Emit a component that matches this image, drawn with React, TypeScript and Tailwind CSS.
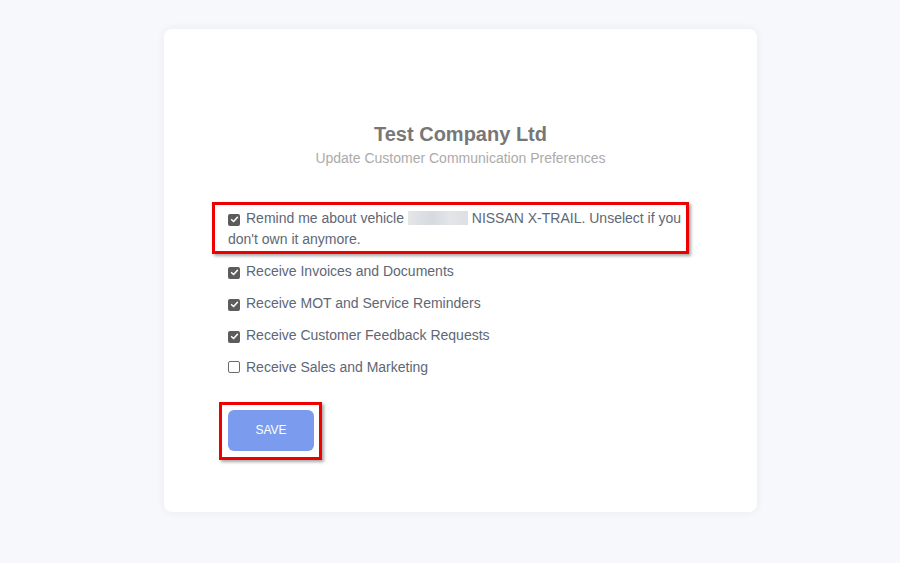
import React from "react";

const font = { fontFamily: '"Liberation Sans", Arial, sans-serif' };

function Check({ checked }: { checked: boolean }) {
  return (
    <span
      className={
        "inline-flex items-center justify-center w-[12px] h-[12px] rounded-[2px] align-[-1px] mr-[6px] " +
        (checked ? "bg-[#5c5c5c]" : "bg-white border border-[#6b6b6b]")
      }
    >
      {checked && (
        <svg width="9" height="9" viewBox="0 0 10 10">
          <path d="M1.8 5.2 L4 7.3 L8.3 2.6" fill="none" stroke="#fff" strokeWidth="1.7" strokeLinecap="round" strokeLinejoin="round" />
        </svg>
      )}
    </span>
  );
}

export default function App() {
  const rows = [
    { label: "Receive Invoices and Documents", checked: true },
    { label: "Receive MOT and Service Reminders", checked: true },
    { label: "Receive Customer Feedback Requests", checked: true },
    { label: "Receive Sales and Marketing", checked: false },
  ];
  return (
    <div className="min-h-[563px] w-full bg-[#f7f8fc] pt-[29px]" style={font}>
      <div className="ml-[164px] w-[593px] h-[483px] bg-white rounded-[8px] shadow-[0_0_10px_rgba(0,0,0,0.06)] pt-[94px] pl-[48px] pr-[48px]">
        <div className="text-center">
          <div className="text-[20px] leading-[22px] font-bold text-[#777]">Test Company Ltd</div>
          <div className="text-[14px] leading-[18px] mt-[4px] text-[#ababab]">Update Customer Communication Preferences</div>
        </div>
        <div className="mt-[35px] text-[14px] leading-[21px] text-[#5e6775]">
          <div className="w-[477px] border-[3px] border-[#ee0000] shadow-[2px_2px_3px_rgba(0,0,0,0.35)] pl-[13px] pr-[3px] pt-[3px] pb-[1px]">
            <div className="w-[458px]">
              <Check checked />
              Remind me about vehicle{" "}
              <span className="inline-block w-[60px] h-[14px] align-[-2px] bg-[linear-gradient(90deg,#e4e6ea,#d6d9de_40%,#e3e5e9_70%,#dcdfe3)]"></span>{" "}
              NISSAN X-TRAIL. Unselect if you don't own it anymore.
            </div>
          </div>
          <div className="pl-[16px] mt-[7px] flex flex-col gap-[11px]">
            {rows.map((r) => (
              <div key={r.label}>
                <Check checked={r.checked} />
                {r.label}
              </div>
            ))}
          </div>
          <div className="mt-[24px] ml-[7px] inline-block border-[3px] border-[#ee0000] shadow-[2px_2px_3px_rgba(0,0,0,0.35)] pl-[6px] pr-[5px] pt-[5px] pb-[6px]">
            <button className="w-[86px] h-[41px] rounded-[6px] bg-[#7b9cee] text-white text-[12px] flex items-center justify-center">
              SAVE
            </button>
          </div>
        </div>
      </div>
    </div>
  );
}
